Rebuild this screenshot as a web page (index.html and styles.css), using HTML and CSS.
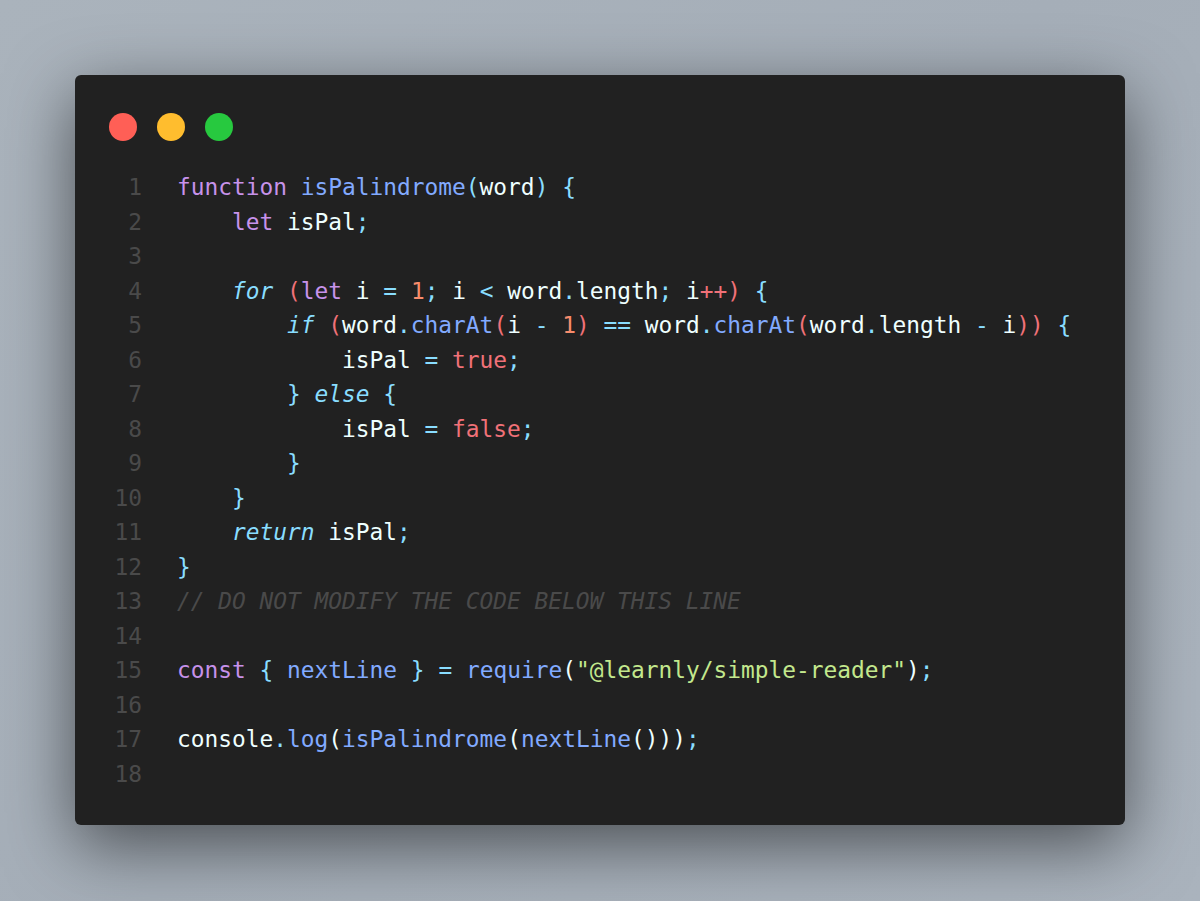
FILE: index.html
```html
<!DOCTYPE html>
<html lang="en">
<head>
<meta charset="utf-8">
<title>isPalindrome</title>
<link rel="stylesheet" href="styles.css">
</head>
<body>
<div class="stage">
  <div class="window">
    <div class="controls">
      <span class="dot red"></span>
      <span class="dot yellow"></span>
      <span class="dot green"></span>
    </div>
    <div class="code">
      <div class="line"><span class="ln">1</span><span class="src"><span class="kw">function</span> <span class="fn">isPalindrome</span><span class="pc">(</span>word<span class="pc">)</span> <span class="pc">{</span></span></div>
      <div class="line"><span class="ln">2</span><span class="src">    <span class="kw">let</span> isPal<span class="pc">;</span></span></div>
      <div class="line"><span class="ln">3</span><span class="src"></span></div>
      <div class="line"><span class="ln">4</span><span class="src">    <span class="ctl">for</span> <span class="br">(</span><span class="kw">let</span> i <span class="pc">=</span> <span class="num">1</span><span class="pc">;</span> i <span class="pc">&lt;</span> word<span class="pc">.</span>length<span class="pc">;</span> i<span class="br">++)</span> <span class="pc">{</span></span></div>
      <div class="line"><span class="ln">5</span><span class="src">        <span class="ctl">if</span> <span class="br">(</span>word<span class="pc">.</span><span class="fn">charAt</span><span class="br">(</span>i <span class="pc">-</span> <span class="num">1</span><span class="br">)</span> <span class="pc">==</span> word<span class="pc">.</span><span class="fn">charAt</span><span class="br">(</span>word<span class="pc">.</span>length <span class="pc">-</span> i<span class="br">))</span> <span class="pc">{</span></span></div>
      <div class="line"><span class="ln">6</span><span class="src">            isPal <span class="pc">=</span> <span class="bool">true</span><span class="pc">;</span></span></div>
      <div class="line"><span class="ln">7</span><span class="src">        <span class="pc">}</span> <span class="ctl">else</span> <span class="pc">{</span></span></div>
      <div class="line"><span class="ln">8</span><span class="src">            isPal <span class="pc">=</span> <span class="bool">false</span><span class="pc">;</span></span></div>
      <div class="line"><span class="ln">9</span><span class="src">        <span class="pc">}</span></span></div>
      <div class="line"><span class="ln">10</span><span class="src">    <span class="pc">}</span></span></div>
      <div class="line"><span class="ln">11</span><span class="src">    <span class="ctl">return</span> isPal<span class="pc">;</span></span></div>
      <div class="line"><span class="ln">12</span><span class="src"><span class="pc">}</span></span></div>
      <div class="line"><span class="ln">13</span><span class="src"><span class="cm">// DO NOT MODIFY THE CODE BELOW THIS LINE</span></span></div>
      <div class="line"><span class="ln">14</span><span class="src"></span></div>
      <div class="line"><span class="ln">15</span><span class="src"><span class="kw">const</span> <span class="pc">{</span> <span class="fn">nextLine</span> <span class="pc">}</span> <span class="pc">=</span> <span class="fn">require</span><span class="par">(</span><span class="qt">"</span><span class="str">@learnly/simple-reader</span><span class="qt">"</span><span class="par">)</span><span class="pc">;</span></span></div>
      <div class="line"><span class="ln">16</span><span class="src"></span></div>
      <div class="line"><span class="ln">17</span><span class="src">console<span class="pc">.</span><span class="fn">log</span><span class="par">(</span><span class="fn">isPalindrome</span><span class="par">(</span><span class="fn">nextLine</span><span class="par">()))</span><span class="pc">;</span></span></div>
      <div class="line"><span class="ln">18</span><span class="src"></span></div>
    </div>
  </div>
</div>
</body>
</html>
```

FILE: styles.css
```css
html, body {
  margin: 0;
  padding: 0;
}

body {
  width: 1200px;
  height: 901px;
  background: linear-gradient(135deg, #aab3bc 0%, #a5aeb8 50%, #aab3bd 100%);
  overflow: hidden;
}

.stage {
  padding: 75px 75px 0 75px;
}

.window {
  width: 1050px;
  height: 750px;
  box-sizing: border-box;
  background: #212121;
  border-radius: 6px;
  box-shadow: 0 20px 68px rgba(0, 0, 0, 0.55);
  padding: 38px 0 0 34px;
}

.controls {
  display: flex;
  gap: 20px;
  height: 28px;
}

.dot {
  width: 28px;
  height: 28px;
  border-radius: 50%;
}

.red { background: #ff5f56; }
.yellow { background: #ffbd2e; }
.green { background: #27c93f; }

.code {
  margin-top: 29px;
  margin-left: 5px;
  font-family: "DejaVu Sans Mono", "Liberation Mono", monospace;
  font-size: 22.85px;
  line-height: 34.5px;
  color: #eeffff;
}

.line {
  display: flex;
  height: 34.5px;
}

.ln {
  width: 28px;
  text-align: right;
  color: #4a4a4a;
  flex: none;
}

.src {
  margin-left: 35px;
  white-space: pre;
}

.kw { color: #c792ea; }
.fn { color: #82aaff; }
.pc { color: #89ddff; }
.br { color: #f07178; }
.par { color: #eeffff; }
.num { color: #f78c6c; }
.bool { color: #f07178; }
.ctl { color: #89ddff; font-style: italic; }
.str { color: #c3e88d; }
.qt { color: #c3e88d; }
.cm { color: #4a4a4a; font-style: italic; }
```
